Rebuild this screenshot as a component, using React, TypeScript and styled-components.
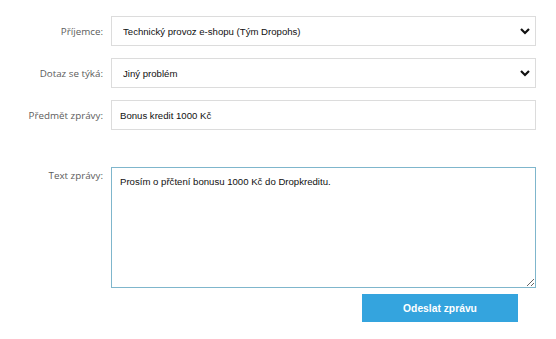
import React, { useEffect, useRef } from "react";
import styled, { createGlobalStyle } from "styled-components";

const GlobalStyle = createGlobalStyle`
  html, body {
    margin: 0;
    padding: 0;
    background: #ffffff;
  }
`;

const Form = styled.form`
  display: grid;
  grid-template-columns: 103px 425px;
  column-gap: 8px;
  row-gap: 12px;
  padding: 16px 0 0 0;
  align-items: center;
`;

const Label = styled.label<{ top?: boolean }>`
  font-family: "Open Sans", "Noto Sans", sans-serif;
  font-size: 9.8px;
  color: #5c5c5c;
  text-align: right;
  white-space: nowrap;
  align-self: ${(p) => (p.top ? "start" : "center")};
  padding-top: ${(p) => (p.top ? "2px" : "0")};
`;

const SelectWrap = styled.div`
  position: relative;
  height: 30px;
`;

const Select = styled.select`
  appearance: none;
  -webkit-appearance: none;
  box-sizing: border-box;
  width: 100%;
  height: 30px;
  border: 1px solid #dcdcdc;
  border-radius: 0;
  background: #fff;
  padding: 0 24px 0 11px;
  font-family: "Liberation Sans", Arial, sans-serif;
  font-size: 9.6px;
  color: #111;
  outline: none;
`;

const Chevron = styled.svg`
  position: absolute;
  right: 6px;
  top: 11px;
  width: 10px;
  height: 8px;
  pointer-events: none;
`;

const Input = styled.input`
  box-sizing: border-box;
  width: 100%;
  height: 30px;
  border: 1px solid #dcdcdc;
  padding: 0 8px;
  font-family: "Liberation Sans", Arial, sans-serif;
  font-size: 9.6px;
  color: #111;
  outline: none;
`;

const Spacer = styled.div`
  grid-column: 1 / span 2;
  height: 13px;
`;

const TextArea = styled.textarea`
  box-sizing: border-box;
  width: 100%;
  height: 121px;
  border: 1px solid #7fb6cc;
  padding: 8px 8px;
  font-family: "Liberation Sans", Arial, sans-serif;
  font-size: 9.6px;
  color: #111;
  outline: none;
  resize: both;
  display: block;
  caret-color: #000;

  &:focus {
    border-color: #7fb6cc;
  }
`;

const ButtonRow = styled.div`
  grid-column: 2;
  display: flex;
  justify-content: flex-end;
  padding-right: 18px;
  margin-top: -6px;
`;

const SubmitButton = styled.button`
  width: 156px;
  height: 28px;
  border: none;
  background: #34a4de;
  color: #fff;
  font-family: "Liberation Sans", Arial, sans-serif;
  font-weight: bold;
  font-size: 10.3px;
  cursor: pointer;
`;

const ChevronIcon = () => (
  <Chevron viewBox="0 0 10 8">
    <path d="M1 2 L5 6 L9 2" fill="none" stroke="#111" strokeWidth="2.2" />
  </Chevron>
);

const App: React.FC = () => {
  const ref = useRef<HTMLTextAreaElement>(null);
  const message = "Prosím o přčtení bonusu 1000 Kč do Dropkreditu.";

  useEffect(() => {
    if (ref.current) {
      ref.current.focus();
      ref.current.setSelectionRange(message.length, message.length);
    }
  }, []);

  return (
    <>
      <GlobalStyle />
      <Form onSubmit={(e) => e.preventDefault()}>
        <Label>Příjemce:</Label>
        <SelectWrap>
          <Select defaultValue="tech">
            <option value="tech">Technický provoz e-shopu (Tým Dropohs)</option>
          </Select>
          <ChevronIcon />
        </SelectWrap>

        <Label>Dotaz se týká:</Label>
        <SelectWrap>
          <Select defaultValue="jiny">
            <option value="jiny">Jiný problém</option>
          </Select>
          <ChevronIcon />
        </SelectWrap>

        <Label>Předmět zprávy:</Label>
        <Input defaultValue="Bonus kredit 1000 Kč" />

        <Spacer />

        <Label top>Text zprávy:</Label>
        <TextArea ref={ref} defaultValue={message} />

        <ButtonRow>
          <SubmitButton type="submit">Odeslat zprávu</SubmitButton>
        </ButtonRow>
      </Form>
    </>
  );
};

export default App;
